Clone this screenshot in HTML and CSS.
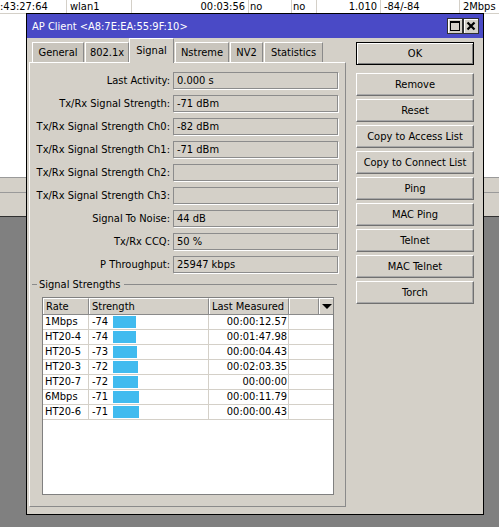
FILE: index.html
```html
<!DOCTYPE html>
<html>
<head>
<meta charset="utf-8">
<link rel="stylesheet" href="styles.css">
</head>
<body>
<div class="desk">
  <div class="list">
    <div class="lrow">
      <span class="c c1">:43:27:64</span>
      <span class="c c2">wlan1</span>
      <span class="c c3 r">00:03:56</span>
      <span class="c c4">no</span>
      <span class="c c5">no</span>
      <span class="c c6 r">1.010</span>
      <span class="c c7">-84/-84</span>
      <span class="c c8">2Mbps</span>
    </div>
  </div>
  <div class="band"><div class="band1"></div><div class="band2"></div></div>
</div>

<div class="dialog">
  <div class="titlebar">
    <span class="title">AP Client &lt;A8:7E:EA:55:9F:10&gt;</span>
    <span class="tbtns">
      <span class="tbtn"><svg width="14" height="14" viewBox="0 0 14 14"><rect x="2.5" y="2.5" width="9" height="9" fill="none" stroke="#000" stroke-width="1"/><rect x="2" y="2" width="10" height="2" fill="#000"/></svg></span>
      <span class="tbtn"><svg width="14" height="14" viewBox="0 0 14 14"><path d="M3.5 3.5 L10.5 10.5 M10.5 3.5 L3.5 10.5" stroke="#000" stroke-width="2.2" fill="none"/></svg></span>
    </span>
  </div>
  <div class="dbody">
    <div class="leftcol">
      <div class="tabs">
        <span class="tab t1">General</span>
        <span class="tab t2">802.1x</span>
        <span class="tab t3 sel">Signal</span>
        <span class="tab t4">Nstreme</span>
        <span class="tab t5">NV2</span>
        <span class="tab t6">Statistics</span>
      </div>
      <div class="panel">
        <div class="form">
          <span class="lbl">Last Activity:</span><span class="field">0.000 s</span>
          <span class="lbl">Tx/Rx Signal Strength:</span><span class="field">-71 dBm</span>
          <span class="lbl">Tx/Rx Signal Strength Ch0:</span><span class="field">-82 dBm</span>
          <span class="lbl">Tx/Rx Signal Strength Ch1:</span><span class="field">-71 dBm</span>
          <span class="lbl">Tx/Rx Signal Strength Ch2:</span><span class="field"></span>
          <span class="lbl">Tx/Rx Signal Strength Ch3:</span><span class="field"></span>
          <span class="lbl">Signal To Noise:</span><span class="field">44 dB</span>
          <span class="lbl">Tx/Rx CCQ:</span><span class="field">50 %</span>
          <span class="lbl">P Throughput:</span><span class="field">25947 kbps</span>
        </div>
        <div class="group">
          <span class="dash"></span><span class="gtitle">Signal Strengths</span><span class="gline"></span>
        </div>
        <div class="table">
          <div class="thead">
            <span class="th w1">Rate</span>
            <span class="th w2">Strength</span>
            <span class="th w3">Last Measured</span>
            <span class="th w4"></span>
            <span class="th w5"><span class="arrow"></span></span>
          </div>
          <div class="tr"><span class="td w1">1Mbps</span><span class="td w2"><span class="sv">-74</span><span class="bar" style="width:23px"></span></span><span class="td w3 r">00:00:12.57</span></div>
          <div class="tr"><span class="td w1">HT20-4</span><span class="td w2"><span class="sv">-74</span><span class="bar" style="width:23px"></span></span><span class="td w3 r">00:01:47.98</span></div>
          <div class="tr"><span class="td w1">HT20-5</span><span class="td w2"><span class="sv">-73</span><span class="bar" style="width:24px"></span></span><span class="td w3 r">00:00:04.43</span></div>
          <div class="tr"><span class="td w1">HT20-3</span><span class="td w2"><span class="sv">-72</span><span class="bar" style="width:25px"></span></span><span class="td w3 r">00:02:03.35</span></div>
          <div class="tr"><span class="td w1">HT20-7</span><span class="td w2"><span class="sv">-72</span><span class="bar" style="width:25px"></span></span><span class="td w3 r">00:00:00</span></div>
          <div class="tr"><span class="td w1">6Mbps</span><span class="td w2"><span class="sv">-71</span><span class="bar" style="width:26px"></span></span><span class="td w3 r">00:00:11.79</span></div>
          <div class="tr"><span class="td w1">HT20-6</span><span class="td w2"><span class="sv">-71</span><span class="bar" style="width:26px"></span></span><span class="td w3 r">00:00:00.43</span></div>
        </div>
      </div>
    </div>
    <div class="btns">
      <span class="btn ok">OK</span>
      <span class="btn">Remove</span>
      <span class="btn">Reset</span>
      <span class="btn">Copy to Access List</span>
      <span class="btn">Copy to Connect List</span>
      <span class="btn">Ping</span>
      <span class="btn">MAC Ping</span>
      <span class="btn">Telnet</span>
      <span class="btn">MAC Telnet</span>
      <span class="btn">Torch</span>
    </div>
  </div>
</div>
</body>
</html>
```

FILE: styles.css
```css
* { box-sizing: border-box; }
html, body { margin: 0; padding: 0; }
body {
  width: 499px;
  height: 527px;
  overflow: hidden;
  position: relative;
  background: #808080;
  font-family: "DejaVu Sans Condensed", "Liberation Sans", sans-serif;
  font-size: 11px;
  color: #000;
}

/* background list window */
.list { background: #fff; height: 177px; }
.lrow {
  display: flex;
  height: 14px;
  line-height: 13px;
  border-bottom: 1px solid #d4d0c8;
}
.c {
  display: block;
  white-space: nowrap;
  overflow: hidden;
  padding: 0 3px;
  border-right: 1px solid #d4d0c8;
}
.r { text-align: right; }
.c1 { width: 67px; padding-left: 0; }
.c2 { width: 65px; }
.c3 { width: 117px; }
.c4 { width: 43px; padding-left: 1px; }
.c5 { width: 25px; padding-left: 1px; }
.c6 { width: 64px; }
.c7 { width: 79px; }
.c8 { flex: 1; border-right: none; }

.band {
  background: #d4d0c8;
  border-top: 1px solid #9a9a9a;
  border-bottom: 1px solid #303030;
}
.band1 { height: 15px; border-bottom: 1px solid #9a9a9a; }
.band2 { height: 23px; }

/* dialog window */
.dialog {
  position: absolute;
  left: 26px;
  top: 13px;
  width: 458px;
  height: 502px;
  border: 1px solid #000;
  background: #d4d0c8;
  display: flex;
  flex-direction: column;
}
.titlebar {
  height: 24px;
  flex: none;
  background: #4a4ac6;
  color: #fff;
  display: flex;
  align-items: center;
  padding: 0 4px 0 5px;
}
.title { flex: 1; white-space: nowrap; }
.tbtns { display: flex; }
.tbtn {
  width: 16px;
  height: 16px;
  background: #d4d0c8;
  border: 1px solid #303030;
  box-shadow: inset 1px 1px 0 #fff;
  display: flex;
  align-items: center;
  justify-content: center;
}

.dbody {
  flex: 1;
  display: flex;
  padding-left: 2px;
}
.leftcol {
  width: 317px;
  display: flex;
  flex-direction: column;
}
.tabs {
  height: 24px;
  display: flex;
  align-items: flex-end;
  padding-left: 3px;
  position: relative;
  z-index: 1;
}
.tab {
  height: 20px;
  line-height: 19px;
  text-align: center;
  background: #c9c5bd;
  border-top: 1px solid #fff;
  border-left: 1px solid #fff;
  border-right: 1px solid #8a8a8a;
  margin-right: 1px;
  white-space: nowrap;
}
.t1 { width: 52px; }
.t2 { width: 44px; margin-right: 0; }
.t3 { width: 45px; }
.t4 { width: 54px; }
.t5 { width: 33px; }
.t6 { width: 59px; }
.tab.sel {
  height: 25px;
  line-height: 23px;
  margin-bottom: -1px;
  background: #d4d0c8;
}

.panel {
  height: 445px;
  border: 1px solid;
  border-color: #fff #8a8a8a #8a8a8a #fff;
  padding-top: 9px;
}
.form {
  display: grid;
  grid-template-columns: 141px 165px;
  grid-auto-rows: 17px;
  column-gap: 2px;
  row-gap: 6px;
}
.lbl {
  text-align: right;
  line-height: 18px;
  padding-right: 1px;
  white-space: nowrap;
}
.field {
  border: 1px solid #8c8c8c;
  box-shadow: 1px 1px 0 #fff;
  line-height: 16px;
  padding-left: 3px;
  white-space: nowrap;
}

.group {
  display: flex;
  align-items: center;
  height: 14px;
  margin-top: 4px;
  padding-left: 2px;
  padding-right: 8px;
}
.dash { width: 5px; height: 1px; background: #8a8a8a; }
.gtitle { padding: 0 3px 0 2px; white-space: nowrap; }
.gline { flex: 1; height: 1px; background: #8a8a8a; }

.table {
  margin: 6px 0 0 12px;
  width: 292px;
  height: 198px;
  background: #fff;
  border: 1px solid #808080;
}
.thead {
  display: flex;
  height: 17px;
  background: #d4d0c8;
  border-bottom: 1px solid #8a8a8a;
}
.th {
  display: block;
  height: 16px;
  line-height: 15px;
  padding-left: 2px;
  border-top: 1px solid #fff;
  border-left: 1px solid #fff;
  border-right: 1px solid #8a8a8a;
  white-space: nowrap;
}
.w1 { width: 46px; }
.w2 { width: 120px; }
.w3 { width: 80px; }
.w4 { width: 30px; }
.w5 { width: 14px; border-right: none; display: flex; align-items: center; justify-content: center; padding-left: 0; }
.arrow {
  width: 0;
  height: 0;
  border-left: 5px solid transparent;
  border-right: 5px solid transparent;
  border-top: 5px solid #000;
}
.tr {
  display: flex;
  height: 15px;
  border-bottom: 1px solid #d4d0c8;
}
.td {
  display: flex;
  align-items: center;
  line-height: 14px;
  padding-left: 2px;
  border-right: 1px solid #d4d0c8;
  white-space: nowrap;
}
.td.r { justify-content: flex-end; padding-left: 0; padding-right: 1px; }
.td.w2 { padding-left: 3px; }
.sv { width: 21px; }
.bar { display: block; height: 12px; background: #41bbef; }

.btns {
  width: 118px;
  margin-left: 10px;
  padding-top: 4px;
  display: flex;
  flex-direction: column;
}
.btn {
  display: block;
  height: 23px;
  line-height: 22px;
  text-align: center;
  margin-bottom: 3px;
  border: 1px solid;
  border-color: #fff #707070 #707070 #fff;
  box-shadow: inset -1px -1px 0 #a8a8a8;
  white-space: nowrap;
}
.btn.ok {
  margin-bottom: 8px;
  border: 1px solid #000;
  box-shadow: inset 1px 1px 0 #fff, inset -1px -1px 0 #808080;
}
```
